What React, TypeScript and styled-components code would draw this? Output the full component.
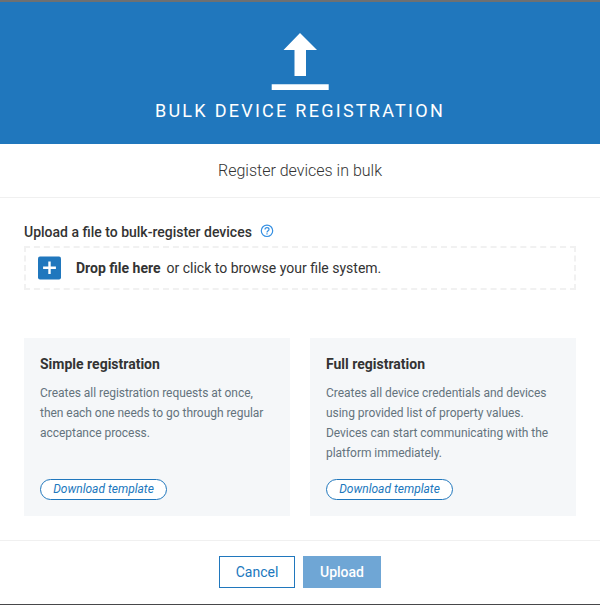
import React from 'react';
import styled, { createGlobalStyle } from 'styled-components';

const GlobalStyle = createGlobalStyle`
  * { box-sizing: border-box; }
  body {
    margin: 0;
    background: #fff;
    font-family: Roboto, "Liberation Sans", sans-serif;
    font-size: 14px;
    line-height: 20px;
    color: #333;
    overflow: hidden;
  }
  h1, h2, h3, p { margin: 0; }
`;

const Modal = styled.div`
  width: 600px;
  height: 605px;
  display: flex;
  flex-direction: column;
  border-top: 2px solid #6e7072;
  border-bottom: 1px solid #48484a;
`;

const Header = styled.header`
  height: 142px;
  flex: none;
  padding-top: 31px;
  display: flex;
  flex-direction: column;
  align-items: center;
  background: #2077bd;
  color: #fff;
`;

const Title = styled.h1`
  margin-top: 8px;
  font-size: 18px;
  line-height: 24px;
  font-weight: 400;
  letter-spacing: 2.27px;
  text-transform: uppercase;
  white-space: nowrap;
`;

const Subtitle = styled.p`
  height: 54px;
  flex: none;
  border-bottom: 1px solid #f0f0f0;
  font-size: 16px;
  font-weight: 300;
  line-height: 53px;
  text-align: center;
`;

const Content = styled.main`
  height: 343px;
  flex: none;
  padding: 24px 24px 0;
  border-bottom: 1px solid #f0f0f0;
`;

const Label = styled.div`
  display: flex;
  height: 24px;
  font-weight: 500;
  gap: 8px;
  white-space: nowrap;

  svg { margin-top: 2px; }
`;

const DropZone = styled.div`
  height: 44px;
  display: flex;
  align-items: center;
  padding-left: 12px;
  border: 2px dashed #f1f1f1;
  white-space: pre;

  svg { margin-right: 15px; }
`;

const Strong = styled.span`
  font-weight: 700;
  margin-right: 6px;
`;

const Cards = styled.div`
  display: grid;
  grid-template-columns: 1fr 1fr;
  gap: 20px;
  margin-top: 48px;
`;

const Card = styled.section`
  height: 178px;
  padding: 16px;
  display: flex;
  flex-direction: column;
  align-items: flex-start;
  background: #f5f7f9;
`;

const CardTitle = styled.h2`
  font-size: 14px;
  line-height: 20px;
  font-weight: 700;
`;

const CardText = styled.p`
  margin-top: 9px;
  font-size: 12px;
  line-height: 20px;
  letter-spacing: -0.04px;
  color: #64737d;
  white-space: pre;
`;

const Template = styled.button`
  margin: auto 0 0;
  width: 127px;
  height: 21px;
  padding: 0;
  border: 1px solid #2077bd;
  border-radius: 11px;
  background: #fff;
  color: #2077bd;
  font: italic 400 12px/19px Roboto, sans-serif;
`;

const Footer = styled.footer`
  display: flex;
  justify-content: center;
  gap: 8px;
  padding-top: 15px;
`;

const Button = styled.button<{ $primary?: boolean }>`
  width: ${(p) => (p.$primary ? 78 : 76)}px;
  height: 32px;
  padding: 0;
  border: 1px solid ${(p) => (p.$primary ? '#6fa6d5' : '#2077bd')};
  background: ${(p) => (p.$primary ? '#6fa6d5' : '#fff')};
  color: ${(p) => (p.$primary ? '#fff' : '#2077bd')};
  font: ${(p) => (p.$primary ? 500 : 400)} 14px/30px Roboto, sans-serif;
`;

const UploadIcon = () => (
  <svg width="58" height="58" viewBox="0 0 58 58" fill="#fff">
    <path d="M29 0 46 17H35V43H23.5V17H12.5Z" />
    <path d="M.7 51.3H57.7V57H.7Z" />
  </svg>
);

const HelpIcon = () => (
  <svg width="14" height="14" viewBox="0 0 14 14" fill="none" stroke="#348fe2" strokeWidth="1.2">
    <circle cx="7" cy="6.8" r="5.7" />
    <path d="M5 5.5Q5 3.6 7 3.6T9 5.4C9 6.8 7 6.8 7 8.5" />
    <path d="M7 9.2V10.5" />
  </svg>
);

const PlusIcon = () => (
  <svg width="23" height="24" viewBox="0 0 23 24">
    <rect y=".4" width="23" height="23" rx="2" fill="#2077bd" />
    <path d="M11.5 5.5V18.1M5.1 11.8H17.9" stroke="#fff" strokeWidth="2.4" />
  </svg>
);

const templates = [
  {
    title: 'Simple registration',
    text: 'Creates all registration requests at once,\nthen each one needs to go through regular\nacceptance process.',
  },
  {
    title: 'Full registration',
    text: 'Creates all device credentials and devices\nusing provided list of property values.\nDevices can start communicating with the\nplatform immediately.',
  },
];

export default function App() {
  return (
    <>
      <GlobalStyle />
      <Modal>
        <Header>
          <UploadIcon />
          <Title>Bulk device registration</Title>
        </Header>
        <Subtitle>Register devices in bulk</Subtitle>
        <Content>
          <Label>
            Upload a file to bulk-register devices
            <HelpIcon />
          </Label>
          <DropZone>
            <PlusIcon />
            <Strong>Drop file here</Strong>
            or click to browse your file system.
          </DropZone>
          <Cards>
            {templates.map((t) => (
              <Card key={t.title}>
                <CardTitle>{t.title}</CardTitle>
                <CardText>{t.text}</CardText>
                <Template>Download template</Template>
              </Card>
            ))}
          </Cards>
        </Content>
        <Footer>
          <Button>Cancel</Button>
          <Button $primary>Upload</Button>
        </Footer>
      </Modal>
    </>
  );
}
